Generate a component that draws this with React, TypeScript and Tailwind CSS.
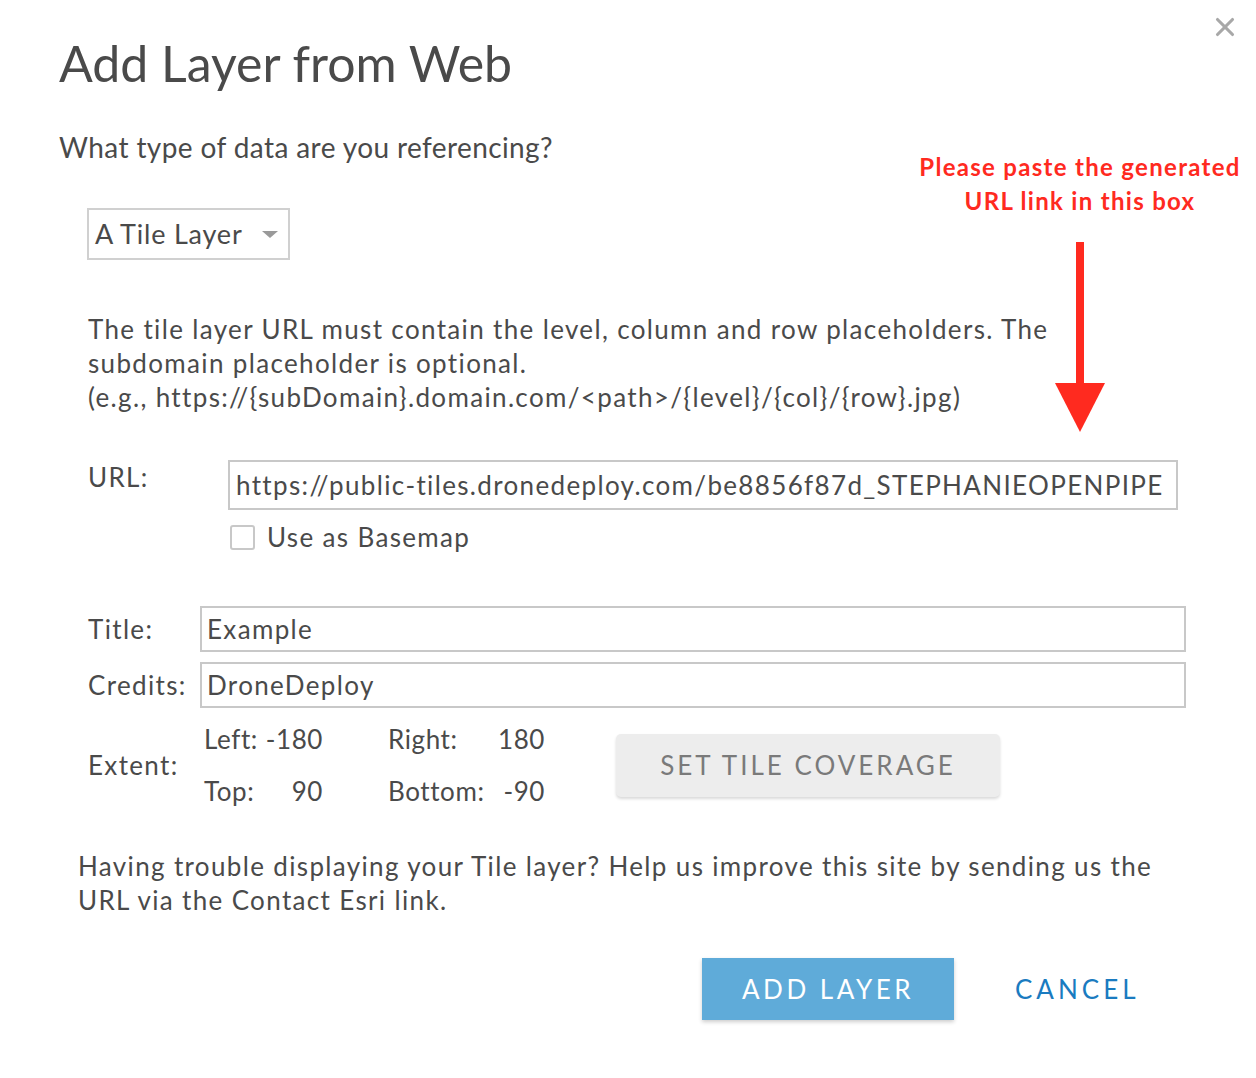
import { X } from "lucide-react";

const font = { fontFamily: "Lato, 'Open Sans', sans-serif" };

export default function App() {
  return (
    <div className="w-[1256px] h-[1078px] bg-white text-[#4a4a4a] relative overflow-hidden" style={font}>
      {/* close button */}
      <button className="absolute top-[12px] right-[16px] text-[#a8a8a8]">
        <X size={30} strokeWidth={2.5} />
      </button>

      {/* annotation */}
      <div className="absolute top-[150px] left-[910px] w-[340px] text-center text-[#ff2a1f] font-bold text-[24px] leading-[34px] tracking-[1.3px]">
        Please paste the generated
        <br />
        URL link in this box
      </div>
      <svg className="absolute left-[1054px] top-[242px]" width="52" height="192" viewBox="0 0 52 192">
        <rect x="22" y="0" width="8" height="144" fill="#ff2a1f" />
        <polygon points="1,141 51,141 26,190" fill="#ff2a1f" />
      </svg>

      <div className="pl-[59px] pt-[30px] tracking-[1.35px]">
        <h1 className="text-[50px] leading-[66px] font-normal tracking-normal text-[#4a4a4a]">Add Layer from Web</h1>
        <p className="mt-[34px] text-[28px] leading-[34px] tracking-[0.4px]">What type of data are you referencing?</p>

        <div className="ml-[28px] mt-[44px] w-[203px] h-[52px] border-2 border-[#d0d0d0] flex items-center justify-between pl-[6px] pr-[10px]">
          <span className="text-[27px] tracking-[0.8px]">A Tile Layer</span>
          <svg width="16" height="10" viewBox="0 0 16 10">
            <polygon points="0,2 16,2 8,9" fill="#9a9a9a" />
          </svg>
        </div>

        <p className="ml-[29px] mt-[52px] text-[26px] leading-[34px] w-[1100px]">
          The tile layer URL must contain the level, column and row placeholders. The
          <br />
          subdomain placeholder is optional.
          <br />
          (e.g., https://{"{subDomain}"}.domain.com/&lt;path&gt;/{"{level}"}/{"{col}"}/{"{row}"}.jpg)
        </p>

        <div className="ml-[29px] mt-[46px] flex">
          <div className="w-[140px] text-[26px] leading-[34px]">URL:</div>
          <div className="flex flex-col">
            <div className="w-[950px] h-[50px] border-2 border-[#c8c8c8] flex items-center pl-[6px] text-[26px] overflow-hidden whitespace-nowrap">
              https://public-tiles.dronedeploy.com/be8856f87d_STEPHANIEOPENPIPE
            </div>
            <label className="flex items-center gap-[12px] mt-[10px] ml-[2px]">
              <span className="w-[25px] h-[25px] border-2 border-[#c8c8c8] rounded-[3px] bg-white" />
              <span className="text-[26px] leading-[34px]">Use as Basemap</span>
            </label>
          </div>
        </div>

        <div className="ml-[29px] mt-[52px] flex items-center">
          <div className="w-[112px] text-[26px]">Title:</div>
          <div className="w-[986px] h-[46px] border-2 border-[#c8c8c8] flex items-center pl-[5px] text-[26px]">Example</div>
        </div>
        <div className="ml-[29px] mt-[10px] flex items-center">
          <div className="w-[112px] text-[26px]">Credits:</div>
          <div className="w-[986px] h-[46px] border-2 border-[#c8c8c8] flex items-center pl-[5px] text-[26px]">DroneDeploy</div>
        </div>

        <div className="ml-[29px] mt-[14px] flex items-center text-[26px]">
          <div className="w-[116px]">Extent:</div>
          <div className="grid grid-cols-[119px_157px] gap-x-[65px] gap-y-[18px] leading-[34px] tracking-[0.6px]">
            <div className="flex justify-between">
              <span>Left:</span>
              <span>-180</span>
            </div>
            <div className="flex justify-between">
              <span>Right:</span>
              <span>180</span>
            </div>
            <div className="flex justify-between">
              <span>Top:</span>
              <span>90</span>
            </div>
            <div className="flex justify-between">
              <span>Bottom:</span>
              <span>-90</span>
            </div>
          </div>
          <button className="ml-[71px] w-[384px] h-[63px] bg-[#ededed] rounded-[5px] shadow-[0_2px_3px_rgba(0,0,0,0.15)] text-[#7a7a7a] text-[26px] tracking-[3px]">
            SET TILE COVERAGE
          </button>
        </div>

        <p className="ml-[19px] mt-[41px] text-[26px] leading-[34px]">
          Having trouble displaying your Tile layer? Help us improve this site by sending us the
          <br />
          URL via the Contact Esri link.
        </p>

        <div className="mt-[41px] flex items-center ml-[643px]">
          <button className="w-[252px] h-[62px] bg-[#5fabd9] text-white text-[26px] tracking-[3.5px] shadow-[0_2px_4px_rgba(0,0,0,0.2)]">
            ADD LAYER
          </button>
          <button className="ml-[61px] text-[#1a7bc0] text-[26px] tracking-[4px]">CANCEL</button>
        </div>
      </div>
    </div>
  );
}
